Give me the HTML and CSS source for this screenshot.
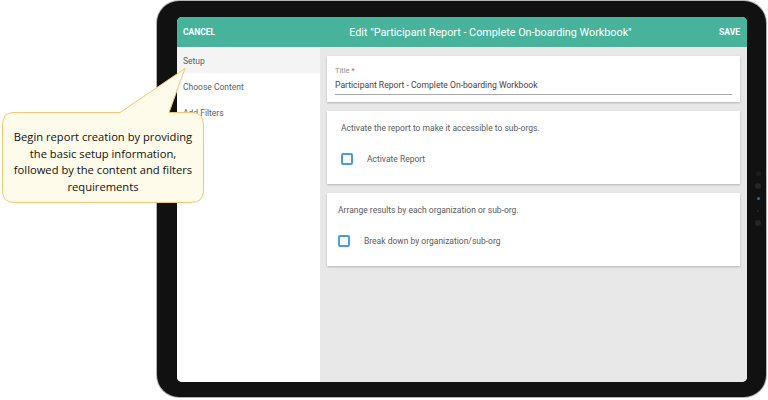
FILE: index.html
```html
<!DOCTYPE html>
<html>
<head>
<meta charset="utf-8">
<link rel="stylesheet" href="styles.css">
</head>
<body>
<div class="stage">
  <div class="tablet">
    <div class="screen">
      <div class="header">
        <span class="hbtn">CANCEL</span>
        <span class="htitle">Edit "Participant Report - Complete On-boarding Workbook"</span>
        <span class="hbtn save">SAVE</span>
      </div>
      <div class="body">
        <nav class="nav">
          <div class="nav-item active">Setup</div>
          <div class="nav-item">Choose Content</div>
          <div class="nav-item">Add Filters</div>
        </nav>
        <main class="content">
          <section class="card card-title">
            <div class="field-label">Title <span class="req">*</span></div>
            <div class="field-value">Participant Report - Complete On-boarding Workbook</div>
          </section>
          <section class="card card-opt">
            <p class="opt-desc">Activate the report to make it accessible to sub-orgs.</p>
            <label class="check"><span class="box"></span><span>Activate Report</span></label>
          </section>
          <section class="card card-opt alt">
            <p class="opt-desc">Arrange results by each organization or sub-org.</p>
            <label class="check"><span class="box"></span><span>Break down by organization/sub-org</span></label>
          </section>
        </main>
      </div>
    </div>
    <div class="side-buttons">
      <span class="dot d1"></span>
      <span class="dot d2"></span>
      <span class="dot d3"></span>
      <span class="dot d4"></span>
      <span class="dot d5"></span>
    </div>
  </div>
  <div class="callout">
    <svg class="callout-shape" width="210" height="150" viewBox="0 0 210 150">
      <path d="M14 52.5 H120 L185 8.5 L169 52.5 H191 Q203.5 52.5 203.5 65 V130.5 Q203.5 142.5 191 142.5 H14 Q2.5 142.5 2.5 130.5 V65 Q2.5 52.5 14 52.5 Z" fill="#fffbea" stroke="#f6c675" stroke-width="1"/>
    </svg>
    <div class="callout-text">Begin report creation by providing<br>the basic setup information,<br>followed by the content and filters<br>requirements</div>
  </div>
</div>
</body>
</html>
```
FILE: styles.css
```css
html, body {
  margin: 0;
  padding: 0;
  background: #ffffff;
}
.stage {
  position: relative;
  width: 768px;
  height: 400px;
  overflow: hidden;
  box-sizing: border-box;
  padding: 1px 0 0 157px;
  font-family: Roboto, "Liberation Sans", sans-serif;
}
.tablet {
  position: relative;
  width: 609px;
  height: 396px;
  box-sizing: border-box;
  background: #111111;
  border-radius: 22px;
  padding: 16px 19px 15px 20px;
  box-shadow: 0 0 0 1px #b5b5b5;
  display: flex;
}
.screen {
  flex: 1;
  display: flex;
  flex-direction: column;
  background: #ffffff;
  border-radius: 5px;
  overflow: hidden;
}
.header {
  height: 30px;
  flex: none;
  background: #48b39b;
  display: flex;
  align-items: center;
  padding: 0 7px 0 6px;
  color: #ffffff;
}
.hbtn {
  font-size: 8.5px;
  font-weight: 700;
}
.htitle {
  font-size: 10.8px;
  margin-left: 134px;
  white-space: nowrap;
}
.save {
  margin-left: auto;
}
.body {
  flex: 1;
  display: flex;
  min-height: 0;
}
.nav {
  width: 143px;
  flex: none;
  background: #ffffff;
}
.nav-item {
  height: 26px;
  line-height: 28px;
  padding-left: 6px;
  font-size: 8.5px;
  color: #5e5e5e;
}
.nav-item.active {
  background: #f4f4f4;
}
.content {
  flex: 1;
  background: #e8e8e8;
  padding: 9px 7px 0 7px;
  display: flex;
  flex-direction: column;
  gap: 9px;
}
.card {
  background: #ffffff;
  box-shadow: 0 1px 2px rgba(0, 0, 0, 0.22);
}
.card-title {
  height: 46px;
  box-sizing: border-box;
  padding: 10px 8px 0 8px;
}
.field-label {
  font-size: 7.5px;
  color: #8c8c8c;
  line-height: 10px;
}
.req {
  color: #e05050;
}
.field-value {
  margin-top: 3px;
  font-size: 8.6px;
  color: #444444;
  line-height: 12px;
  padding-bottom: 3px;
  border-bottom: 1px solid #a8a8a8;
}
.card-opt {
  height: 73px;
  box-sizing: border-box;
  padding: 11px 14px 0 14px;
}
.card-opt.alt {
  padding-left: 11px;
}
.opt-desc {
  margin: 0;
  font-size: 8.5px;
  line-height: 12px;
  color: #5a5a5a;
}
.check {
  display: flex;
  align-items: center;
  margin-top: 19px;
  font-size: 8.5px;
  color: #5a5a5a;
}
.box {
  width: 8px;
  height: 8px;
  border: 2px solid #4a9ed6;
  border-radius: 2px;
  margin-right: 14px;
}
.side-buttons {
  position: absolute;
  left: 597px;
  top: 170px;
  width: 8px;
  display: flex;
  flex-direction: column;
  align-items: center;
}
.dot {
  display: block;
  border-radius: 50%;
  background: #252525;
}
.d1 { width: 5px; height: 5px; background: #1c1c1c; }
.d2 { width: 6px; height: 6px; margin-top: 7px; }
.d3 { width: 3px; height: 3px; margin-top: 8px; background: #2f6c9a; }
.d4 { width: 2px; height: 2px; margin-top: 10px; }
.d5 { width: 6px; height: 6px; margin-top: 8px; }
.callout {
  position: absolute;
  left: 0;
  top: 60px;
  width: 210px;
  height: 150px;
}
.callout-shape {
  position: absolute;
  left: 0;
  top: 0;
}
.callout-text {
  position: absolute;
  left: 3px;
  top: 69px;
  width: 200px;
  text-align: center;
  font-family: "Open Sans", "Noto Sans", sans-serif;
  font-size: 11.2px;
  line-height: 16.7px;
  color: #111111;
}
```
